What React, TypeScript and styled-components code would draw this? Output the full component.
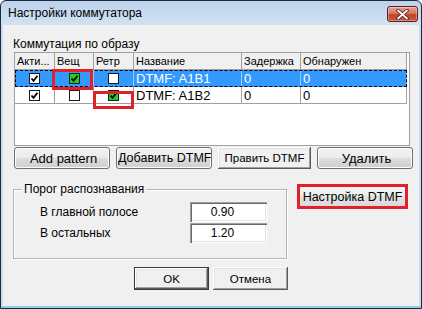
import React from 'react';
import styled, { createGlobalStyle } from 'styled-components';

const GlobalStyle = createGlobalStyle`
  html, body {
    margin: 0;
    padding: 0;
    background: #ffffff;
  }
  body {
    font-family: "Liberation Sans", Arial, sans-serif;
    font-size: 12px;
    color: #000000;
  }
  * {
    box-sizing: border-box;
  }
  button {
    font-weight: 400;
  }
`;

const Window = styled.div`
  width: 422px;
  height: 309px;
  display: flex;
  flex-direction: column;
  border: 1px solid #1d2b3b;
  border-radius: 6px 6px 0 0;
  background: linear-gradient(
    to bottom,
    #bcd2ec 0,
    #d2e2f3 24px,
    #c7dcf1 24px,
    #c7dcf1 calc(100% - 2px),
    #93cfec calc(100% - 2px)
  );
  overflow: hidden;
`;

const TitleBar = styled.div`
  height: 24px;
  flex: none;
  display: flex;
  align-items: flex-start;
  justify-content: space-between;
  padding: 0 3px 0 7px;
`;

const Title = styled.span`
  font-size: 12px;
  line-height: 24px;
  color: #000000;
`;

const CloseButton = styled.div`
  width: 31px;
  height: 16px;
  margin-top: 5px;
  border: 1px solid #5a1f17;
  border-radius: 3px;
  background: linear-gradient(to bottom, #e8a493 0, #d47660 45%, #c2442a 55%, #c8593f 100%);
  box-shadow: inset 0 0 0 1px rgba(255, 255, 255, 0.35);
  display: flex;
  align-items: center;
  justify-content: center;
`;

const Client = styled.div`
  flex: 1;
  margin: 0 2px 2px;
  background: #f0f0f0;
  padding: 12px 0 0 10px;
  display: flex;
  flex-direction: column;
`;

const SectionLabel = styled.div`
  height: 15px;
  line-height: 15px;
  font-size: 12px;
`;

const Grid = styled.div`
  position: relative;
  margin-left: 1px;
  width: 396px;
  height: 94px;
  border: 1px solid #a0a0a0;
  background: #ffffff;
`;

const Row = styled.div<{ $selected?: boolean; $header?: boolean }>`
  display: flex;
  width: 392px;
  height: 17px;
  border-bottom: 1px solid ${(p) => (p.$selected ? 'transparent' : '#a0a0a0')};
  background: ${(p) => (p.$selected ? '#3399ff' : p.$header ? '#f0f0f0' : '#ffffff')};
  color: ${(p) => (p.$selected ? '#ffffff' : '#000000')};
  outline: ${(p) => (p.$selected ? '1px dashed #000000' : 'none')};
  outline-offset: -1px;
`;

const Cell = styled.div<{ $w: number; $header?: boolean; $selected?: boolean; $center?: boolean }>`
  width: ${(p) => p.$w}px;
  flex: none;
  height: 100%;
  border-right: 1px solid ${(p) => (p.$selected ? '#9cc9f5' : '#a0a0a0')};
  padding-left: 2px;
  display: flex;
  align-items: center;
  justify-content: ${(p) => (p.$center ? 'center' : 'flex-start')};
  font-size: ${(p) => (p.$header ? '11px' : '13px')};
  white-space: nowrap;
  overflow: hidden;
`;

const Box = styled.div<{ $green?: boolean }>`
  width: 11px;
  height: 11px;
  border: 1px solid #1a1a1a;
  background: ${(p) => (p.$green ? '#1fd21f' : '#ffffff')};
  display: flex;
  align-items: center;
  justify-content: center;
  margin-left: -2px;
`;

const Marker = styled.div`
  position: absolute;
  border: 3px solid #e0202b;
  pointer-events: none;
`;

const ButtonRow = styled.div`
  display: flex;
  margin: 1px 0 0 1px;
  gap: 6px;
`;

const ThemedButton = styled.button<{ $w: number }>`
  width: ${(p) => p.$w}px;
  height: 22px;
  padding: 0 0 0 3px;
  border: 1px solid #707070;
  border-radius: 3px;
  background: linear-gradient(to bottom, #f2f2f2 0, #ebebeb 50%, #dddddd 50%, #cfcfcf 100%);
  box-shadow: inset 0 0 0 1px #fcfcfc;
  font-family: "Liberation Sans", Arial, sans-serif;
  font-size: 13px;
  font-weight: 400;
  color: #000000;
  white-space: nowrap;
  overflow: hidden;
  text-align: center;
`;

const ClippedButton = styled(ThemedButton)`
  text-align: left;
  padding-left: 1px;
  font-size: 12.5px;
`;

const ClassicButton = styled.button<{ $w: number; $h?: number; $default?: boolean }>`
  width: ${(p) => p.$w}px;
  height: ${(p) => p.$h ?? 22}px;
  padding: 0;
  border: ${(p) => (p.$default ? '1px solid #3a3a3a' : 'none')};
  background: #f0f0f0;
  box-shadow: inset -1px -1px #5a5a5a, inset 1px 1px #ffffff, inset -2px -2px #a0a0a0, inset 2px 2px #e3e3e3;
  font-family: "Liberation Sans", Arial, sans-serif;
  font-size: 11.5px;
  font-weight: 400;
  color: #000000;
  white-space: nowrap;
`;

const Lower = styled.div`
  display: flex;
  align-items: flex-start;
  margin-top: 13px;
`;

const GroupBox = styled.fieldset`
  width: 274px;
  margin: 0;
  padding: 0 19px 15px 8px;
  border: 1px solid #b4b4b4;
  box-shadow: 1px 1px 0 #ffffff, inset 1px 1px 0 #ffffff;
`;

const Legend = styled.legend`
  padding: 0 2px;
  font-size: 12px;
  line-height: 14px;
`;

const Fields = styled.div`
  display: flex;
  flex-direction: column;
  gap: 1px;
  margin: 6px 0 0 18px;
`;

const FieldRow = styled.div`
  display: flex;
  align-items: center;
  justify-content: space-between;
  height: 20px;
`;

const FieldLabel = styled.span`
  font-size: 12px;
`;

const Field = styled.div`
  width: 77px;
  height: 20px;
  background: #ffffff;
  box-shadow: inset 1px 1px #a0a0a0, inset 2px 2px #696969, inset -1px -1px #ffffff, inset -2px -2px #e3e3e3;
  font-size: 12px;
  line-height: 20px;
  text-align: center;
  padding-right: 12px;
`;

const SettingsButton = styled.button`
  width: 111px;
  height: 25px;
  margin: 2px 0 0 10px;
  padding: 0;
  border: 3px solid #e0202b;
  background: linear-gradient(to bottom, #f4f4f4 0, #ececec 50%, #e2e2e2 50%, #dadada 100%);
  font-family: "Liberation Sans", Arial, sans-serif;
  font-size: 12.5px;
  font-weight: 400;
  color: #000000;
  white-space: nowrap;
`;

const Footer = styled.div`
  display: flex;
  justify-content: center;
  gap: 4px;
  margin: 8px 0 0 -10px;
`;

const cols = [40, 39, 40, 108, 59, 106];
const headers = ['Акти...', 'Вещ', 'Ретр', 'Название', 'Задержка', 'Обнаружен'];

type Entry = { active: boolean; real: boolean; retr: boolean; name: string; delay: string; found: string };

const entries: Entry[] = [
  { active: true, real: true, retr: false, name: 'DTMF: A1B1', delay: '0', found: '0' },
  { active: true, real: false, retr: true, name: 'DTMF: A1B2', delay: '0', found: '0' },
];

const Check: React.FC<{ on: boolean; green?: boolean }> = ({ on, green }) => (
  <Box $green={green && on}>
    {on && (
      <svg width="9" height="9" viewBox="0 0 9 9">
        <polyline points="1.5,4.5 3.5,6.8 7.5,1.8" fill="none" stroke="#000" strokeWidth="1.8" />
      </svg>
    )}
  </Box>
);

export default function App() {
  return (
    <>
      <GlobalStyle />
      <Window>
        <TitleBar>
          <Title>Настройки коммутатора</Title>
          <CloseButton>
            <svg width="13" height="11" viewBox="0 0 13 11">
              <path d="M2 1.5 L11 9.5 M11 1.5 L2 9.5" stroke="#4a1a12" strokeWidth="3.4" strokeLinecap="round" />
              <path d="M2 1.5 L11 9.5 M11 1.5 L2 9.5" stroke="#ffffff" strokeWidth="1.8" strokeLinecap="round" />
            </svg>
          </CloseButton>
        </TitleBar>
        <Client>
          <SectionLabel>Коммутация по образу</SectionLabel>
          <Grid>
            <Row $header>
              {headers.map((h, i) => (
                <Cell key={h} $w={cols[i]} $header>
                  {h}
                </Cell>
              ))}
            </Row>
            {entries.map((e, r) => {
              const sel = r === 0;
              return (
                <Row key={e.name} $selected={sel}>
                  <Cell $w={cols[0]} $selected={sel} $center>
                    <Check on={e.active} />
                  </Cell>
                  <Cell $w={cols[1]} $selected={sel} $center>
                    <Check on={e.real} green />
                  </Cell>
                  <Cell $w={cols[2]} $selected={sel} $center>
                    <Check on={e.retr} green />
                  </Cell>
                  <Cell $w={cols[3]} $selected={sel}>
                    {e.name}
                  </Cell>
                  <Cell $w={cols[4]} $selected={sel}>
                    {e.delay}
                  </Cell>
                  <Cell $w={cols[5]} $selected={sel}>
                    {e.found}
                  </Cell>
                </Row>
              );
            })}
            <Marker style={{ left: 37, top: 16, width: 41, height: 21 }} />
            <Marker style={{ left: 78, top: 38, width: 41, height: 18 }} />
          </Grid>
          <ButtonRow>
            <ThemedButton $w={96}>Add pattern</ThemedButton>
            <ClippedButton $w={96}>Добавить DTMF</ClippedButton>
            <ClassicButton $w={93}>Править DTMF</ClassicButton>
            <ThemedButton $w={96}>Удалить</ThemedButton>
          </ButtonRow>
          <Lower>
            <GroupBox>
              <Legend>Порог распознавания</Legend>
              <Fields>
                <FieldRow>
                  <FieldLabel>В главной полосе</FieldLabel>
                  <Field>0.90</Field>
                </FieldRow>
                <FieldRow>
                  <FieldLabel>В остальных</FieldLabel>
                  <Field>1.20</Field>
                </FieldRow>
              </Fields>
            </GroupBox>
            <SettingsButton>Настройка DTMF</SettingsButton>
          </Lower>
          <Footer>
            <ClassicButton $w={75} $h={23} $default>
              OK
            </ClassicButton>
            <ClassicButton $w={75} $h={23}>
              Отмена
            </ClassicButton>
          </Footer>
        </Client>
      </Window>
    </>
  );
}
